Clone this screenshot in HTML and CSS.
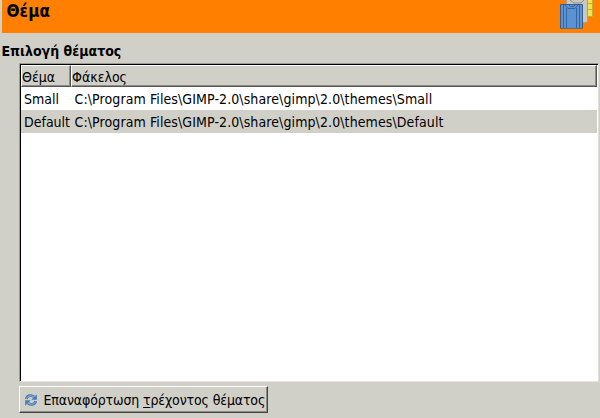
FILE: index.html
```html
<!DOCTYPE html>
<html lang="el">
<head>
<meta charset="utf-8">
<title>Θέμα</title>
<link rel="stylesheet" href="styles.css">
</head>
<body>
<main class="page">
  <header class="banner">
    <h1 class="banner-title">Θέμα</h1>
    <svg class="banner-icon" width="40" height="33" viewBox="0 0 40 33">
      <path fill="#f3e24d" stroke="#c9a92e" d="M20.500-1h12v17.500h-12z"/>
      <path stroke="#c4ae32" d="M27 3.500h5M27 9.500h5"/>
      <path fill="#c9c7c1" stroke="#a19f96" d="M6.500-1h21v23.500h-21z"/>
      <path fill="none" stroke="#8f8e88" d="M10 0l4 3h7l3-3"/>
      <path fill="#5c92cf" stroke="#3b5f8c" d="M.5 4.500h22v24H.5z"/>
      <path fill="none" stroke="#3465a4" d="M3.500 5v23M6.500 8v20M16.500 8v20M19.500 5v23"/>
      <path fill="none" stroke="#3465a4" d="M5 5l3 3.500h7L18 5M9 5l1.500 1.500h3L15 5"/>
      <path stroke="#686c63" d="M0 28.500h23"/>
    </svg>
  </header>
  <section class="section">
    <h2 class="section-title">Επιλογή θέματος</h2>
    <div class="list">
      <div class="list-head">
        <div class="head-cell">Θέμα</div>
        <div class="head-cell">Φάκελος</div>
      </div>
      <div class="row"><span class="name">Small</span><span class="path">C:\Program Files\GIMP-2.0\share\gimp\2.0\themes\Small</span></div>
      <div class="row row-alt"><span class="name">Default</span><span class="path">C:\Program Files\GIMP-2.0\share\gimp\2.0\themes\Default</span></div>
    </div>
    <button class="reload" type="button">
      <svg width="14" height="14" viewBox="0 0 14 14">
        <path fill="none" stroke="#4a7ab5" stroke-width="2.800" d="M2.300 6C3 2.300 7.500 1.500 10 4"/>
        <path fill="#4a7ab5" d="M12.800 1.200v5.500H7.300z"/>
        <path fill="none" stroke="#4a7ab5" stroke-width="2.800" d="M11.700 8C11 11.700 6.500 12.500 4 10"/>
        <path fill="#4a7ab5" d="M1.200 12.800V7.300h5.500z"/>
        <path fill="none" stroke="#8bb2dd" d="M2.500 5.500C3.500 2.500 7.500 1.900 10 4.300M11.500 8.500c-1 3-5 3.600-7.500 1.200"/>
      </svg>
      <span class="reload-label">Επαναφόρτωση <span class="mnemonic">τ</span>ρέχοντος θέματος</span>
    </button>
  </section>
</main>
</body>
</html>
```
FILE: styles.css
```css
* { box-sizing: border-box; }
body {
  margin: 0;
  background: #d1d0c8;
  color: #000;
  font: 14px/20px "DejaVu Sans Condensed", "DejaVu Sans", sans-serif;
  font-stretch: condensed;
  white-space: nowrap;
}
.page { height: 418px; overflow: hidden; }
.banner {
  display: flex;
  justify-content: space-between;
  height: 33px;
  margin-left: 2px;
  padding-left: 4.5px;
  background: #ff8000;
}
.banner-title { margin: 0; font-size: 17px; line-height: 22px; letter-spacing: .1px; }
.section { padding: 8px 1px 0 1px; }
.section-title { margin: 0 0 0 .5px; font-size: 14px; line-height: 20px; }
.list {
  height: 319px;
  margin: 2px 0 0 18px;
  background: #fff;
  border: 1px solid;
  border-color: #9c9b94 #e3e0da #e9e7e2 #9c9b94;
  box-shadow: inset 1px 1px #000;
  padding: 1px 1px 0 1px;
}
.list-head { display: flex; height: 22px; }
.head-cell {
  background: #d1d0c8;
  border: 1px solid;
  border-color: #fff #555 #555 #fff;
  box-shadow: inset -1px -1px #8c8b84;
  line-height: 22px;
}
.head-cell:first-child { width: 50px; }
.head-cell:last-child { flex: 1; }
.row { display: flex; height: 23px; padding-left: 3px; line-height: 25px; }
.row-alt { background: #d1d0c8; }
.name { width: 50.5px; }
.path { letter-spacing: .1px; }
.reload {
  display: flex;
  align-items: center;
  gap: 5.5px;
  width: 249px;
  height: 27px;
  margin: 4px 0 0 18px;
  padding: 0 0 0 4px;
  border: 1px solid;
  border-color: #fff #444 #444 #fff;
  box-shadow: inset -1px -1px #8c8b84;
  background: #d1d0c8;
  color: #000;
  font: inherit;
  letter-spacing: -.14px;
}
.reload-label { padding-top: 1px; }
.mnemonic { text-decoration: underline; text-underline-offset: 2px; }
```
